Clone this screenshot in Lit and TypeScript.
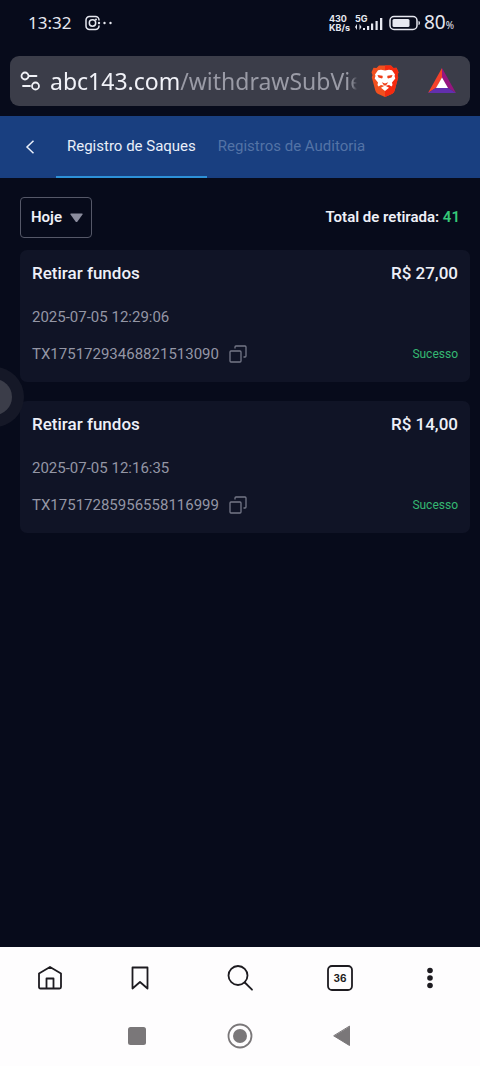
import { LitElement, html, css, svg } from "lit";
import { customElement, property, state } from "lit/decorators.js";
import { classMap } from "lit/directives/class-map.js";

interface Withdrawal {
  amount: string;
  date: string;
  tx: string;
  status: string;
}

const buttonReset = css`
  * {
    box-sizing: border-box;
  }
  svg {
    display: block;
    flex: none;
  }
  button,
  select {
    margin: 0;
    padding: 0;
    border: 0;
    background: none;
    color: inherit;
    font: inherit;
    cursor: pointer;
  }
`;

@customElement("status-bar")
export class StatusBar extends LitElement {
  static styles = [
    buttonReset,
    css`
      :host {
        display: flex;
        align-items: center;
        height: 56px;
        padding: 0 26px 10px 28px;
        color: #e6e8f0;
        font-family: "Noto Sans", sans-serif;
      }
      .time {
        font-size: 17px;
        line-height: 24px;
        margin-right: 14px;
      }
      .status {
        display: flex;
        align-items: center;
        margin-left: auto;
      }
      .speed {
        font-family: Inter, sans-serif;
        font-size: 9px;
        line-height: 9px;
        font-weight: 700;
        margin-right: 5px;
      }
      .battery {
        margin: 0 2px 0 5px;
      }
      .level {
        font-size: 19px;
        line-height: 24px;
      }
      .percent {
        font-size: 10px;
      }
      .net {
        font: 700 9px Inter, sans-serif;
      }
    `,
  ];
  render() {
    return html`
      <span class="time">13:32</span>
      <svg width="30" height="16" viewBox="0 0 30 16" fill="none" stroke="#e6e8f0" stroke-width="1.5" aria-hidden="true">
        <path d="M14 5.5V5a3.500 3.500 0 0 0-3.500-3.500h-6A3.500 3.500 0 0 0 1 5v6a3.500 3.500 0 0 0 3.500 3.500h6A3.500 3.500 0 0 0 14 11v-.5" />
        <circle cx="7.500" cy="8" r="3.200" />
        <g fill="#e6e8f0" stroke="none">
          <circle cx="11" cy="4.500" r="1" />
          <circle cx="14" cy="8" r="1.200" />
          <circle cx="19.500" cy="8" r="1.200" />
          <circle cx="25.500" cy="8" r="1.200" />
        </g>
      </svg>
      <div class="status">
        <div class="speed">430<br />KB/s</div>
        <svg width="29" height="18" viewBox="0 0 29 18" fill="#e6e8f0" aria-hidden="true">
          <text class="net" x="0" y="8">5G</text>
          <path d="M0 13l2-3v6zM6.500 13l-2-3v6z" />
          <path d="M8 14h2v2H8zM12 12h2.200v4H12zM16 9.500h2.200V16H16zM20.500 7h2.200v9h-2.200zM25 4h2.300v12H25z" />
        </svg>
        <svg class="battery" width="33" height="16" viewBox="0 0 33 16" aria-hidden="true">
          <rect x="1" y="1.500" width="27" height="13" rx="4" fill="none" stroke="#e6e8f0" stroke-width="1.500" />
          <rect x="3.500" y="4" width="17" height="8" rx="1.500" fill="#e6e8f0" />
          <path d="M29.500 6q1.500 0 1.500 2t-1.500 2z" fill="#e6e8f0" />
        </svg>
        <span class="level">80<span class="percent">%</span></span>
      </div>
    `;
  }
}

@customElement("address-bar")
export class AddressBar extends LitElement {
  static styles = [
    buttonReset,
    css`
      :host {
        display: flex;
        align-items: center;
        height: 50px;
        margin: 0 10px 10px;
        padding: 0 14px 0 10px;
        border-radius: 9px;
        background: #3b3d49;
      }
      .url {
        flex: 1;
        min-width: 0;
        margin: 0 14px 0 9px;
        overflow: hidden;
        white-space: nowrap;
        text-align: left;
        color: #9a9ba6;
        font-family: "Noto Sans", sans-serif;
        font-size: 23px;
        line-height: 36px;
        mask-image: linear-gradient(to left, transparent, #000 6px);
      }
      .host {
        color: #f1f2f8;
      }
      .rewards {
        margin-left: 29px;
      }
    `,
  ];
  render() {
    return html`
      <button aria-label="Site settings">
        <svg width="21" height="20" viewBox="0 0 21 20" fill="none" stroke="#f1f2f8" stroke-width="1.800" stroke-linecap="round">
          <circle cx="5" cy="5" r="3.500" />
          <path d="M9 5h7.500M3 15h7" />
          <circle cx="15.500" cy="15" r="3.500" />
        </svg>
      </button>
      <button class="url"><span class="host">abc143.com</span>/withdrawSubView</button>
      <button aria-label="Brave Shields">
        <svg width="28" height="34" viewBox="0 0 28 34">
          <path d="M8 1.500h12l2.500 2.500 3-.3 2 4.500-1 3 .7 2-3.600 13.500q-.6 1.800-2.300 3L14 33l-7.300-3.300q-1.700-1.200-2.300-3L.8 13.200l.7-2-1-3 2-4.500 3 .3z" fill="#f1501f" />
          <path d="M14 1.500h6l2.500 2.500 3-.3 2 4.500-1 3 .7 2-3.600 13.500q-.6 1.800-2.300 3L14 33z" fill="#f42a10" />
          <path d="M14 6.500l4-.8 3 .5 3 4.300-.5 1.500.8 2.500-3.300 4 .5 2.500-1 1.500-2.500-1.500L14 22l-4 -1-2.500 1.500-1-1.500.5-2.500-3.300-4 .8-2.500-.5-1.500 3-4.300 3-.5z" fill="#fff" />
          <path d="M14 21.500l4 2.200L14 27l-4-3.300z" fill="#fff" />
          <path d="M6.500 11l5 .8.300 1.500-.8 1.200-3.500-1zM21.500 11l-5 .8-.3 1.500.8 1.200 3.500-1zM10.800 18.200l3.200 1.400 3.200-1.400-1.700 2.600-1.500.9-1.500-.9z" fill="#ee3f18" />
        </svg>
      </button>
      <button class="rewards" aria-label="Brave Rewards">
        <svg width="28" height="26" viewBox="0 0 28 26">
          <path d="M14 0v10L8.500 19.500 0 25z" fill="#f4422b" />
          <path d="M14 0l14 25-8.500-5.500L14 10z" fill="#96157f" />
          <path d="M0 25l8.500-5.500h11L28 25z" fill="#622fae" />
          <path d="M14 9.500l6 10.500H8z" fill="#fff" />
        </svg>
      </button>
    `;
  }
}

@customElement("record-tabs")
export class RecordTabs extends LitElement {
  @state() private active = 0;
  private tabs = ["Registro de Saques", "Registros de Auditoria"];
  static styles = [
    buttonReset,
    css`
      :host {
        display: flex;
        height: 62px;
        padding-left: 20px;
        background: #193f80;
        color: #e9effa;
        font-size: 15px;
        line-height: 20px;
      }
      .back {
        display: flex;
        align-items: center;
        width: 36px;
        padding-left: 5px;
      }
      .tabs {
        display: flex;
      }
      .tab {
        padding: 0 11px;
        border-bottom: 2px solid transparent;
        color: #5373a6;
      }
      .tab.active {
        border-bottom-color: #2d91d8;
        color: #e9effa;
      }
    `,
  ];
  render() {
    return html`
      <button class="back" aria-label="Voltar">
        <svg width="10" height="14" viewBox="0 0 10 14" fill="none" stroke="#e9effa" stroke-width="1.500">
          <path d="M8.500 .8L2 7l6.500 6.200" />
        </svg>
      </button>
      <div class="tabs" role="tablist">
        ${this.tabs.map(
          (label, i) => html`<button
            role="tab"
            aria-selected=${i === this.active}
            class=${classMap({ tab: true, active: i === this.active })}
            @click=${() => (this.active = i)}
          >${label}</button>`
        )}
      </div>
    `;
  }
}

@customElement("withdrawal-card")
export class WithdrawalCard extends LitElement {
  @property({ attribute: false }) record!: Withdrawal;
  static styles = [
    buttonReset,
    css`
      :host {
        display: flex;
        flex-direction: column;
        padding: 12px 12px 18px;
        border-radius: 7px;
        background: #101426;
        color: #9496a5;
        font-size: 15px;
        line-height: 20px;
      }
      .row {
        display: flex;
        align-items: center;
        justify-content: space-between;
      }
      .title {
        margin-bottom: 23px;
        color: #eef0f8;
        font-size: 17px;
        line-height: 22px;
        font-weight: 500;
      }
      .date {
        margin-bottom: 17px;
      }
      .tx {
        display: flex;
        align-items: center;
        gap: 10px;
      }
      .status {
        color: #35b872;
        font-size: 12px;
      }
    `,
  ];
  render() {
    const r = this.record;
    return html`
      <div class="row title"><span>Retirar fundos</span><span>${r.amount}</span></div>
      <div class="date">${r.date}</div>
      <div class="row">
        <span class="tx">
          ${r.tx}
          <button aria-label="Copiar">
            <svg width="18" height="18" viewBox="0 0 18 18" fill="none" stroke="#747787" stroke-width="1.300">
              <rect x="1" y="6" width="11" height="11" rx="1" />
              <path d="M6 3.500V2a1 1 0 0 1 1-1h9a1 1 0 0 1 1 1v9a1 1 0 0 1-1 1h-1.500" />
            </svg>
          </button>
        </span>
        <span class="status">${r.status}</span>
      </div>
    `;
  }
}

@customElement("browser-nav")
export class BrowserNav extends LitElement {
  static styles = [
    buttonReset,
    css`
      :host {
        display: block;
        background: #fefdfe;
      }
      .tools {
        display: grid;
        grid-template-columns: 5fr 4fr 6fr 4fr 5fr;
        height: 61px;
      }
      .system {
        display: grid;
        grid-template-columns: repeat(3, 1fr);
        height: 58px;
        padding: 0 85px 2px;
      }
      button {
        display: grid;
        place-items: center;
      }
      .count {
        font: 700 10px Inter, sans-serif;
      }
    `,
  ];
  render() {
    const icon = (body: unknown) => html`
      <svg width="28" height="28" viewBox="0 0 28 28" fill="none" stroke="#1d1b20" stroke-width="1.800" stroke-linejoin="round" stroke-linecap="round">${body}</svg>
    `;
    return html`
      <nav class="tools">
        <button aria-label="Home">
          ${icon(svg`<path d="M3 9.500L14 3l11 6.500V23q0 1.500-1.500 1.500h-19Q3 24.500 3 23zM10.500 24.500v-10h7v10" />`)}
        </button>
        <button aria-label="Bookmarks">${icon(svg`<path d="M6.500 3.500h15v21L14 18l-7.500 6.500z" />`)}</button>
        <button aria-label="Search">${icon(svg`<circle cx="12" cy="11.500" r="9.500" /><path d="M18.800 18.500l7.200 7.200" />`)}</button>
        <button aria-label="Tabs">
          ${icon(svg`<rect x="2" y="2" width="24" height="24" rx="4" /><text class="count" x="14" y="18" text-anchor="middle" fill="#1d1b20" stroke="none">36</text>`)}
        </button>
        <button aria-label="Menu">
          ${icon(svg`<g fill="#1d1b20" stroke="none"><circle cx="14" cy="6.500" r="2.800" /><circle cx="14" cy="14" r="2.800" /><circle cx="14" cy="21.500" r="2.800" /></g>`)}
        </button>
      </nav>
      <nav class="system">
        <button aria-label="Recents">${icon(svg`<rect x="5" y="5" width="18" height="18" rx="2.500" fill="#7a7779" stroke="none" />`)}</button>
        <button aria-label="Home screen">
          ${icon(svg`<circle cx="14" cy="14" r="11.500" stroke="#7a7779" /><circle cx="14" cy="14" r="7" fill="#7a7779" stroke="none" />`)}
        </button>
        <button aria-label="Back">${icon(svg`<path d="M20.500 4.500v19L5 14z" fill="#7a7779" stroke="#7a7779" stroke-width="1" />`)}</button>
      </nav>
    `;
  }
}

@customElement("app-root")
export class AppRoot extends LitElement {
  private records: Withdrawal[] = [
    { amount: "R$ 27,00", date: "2025-07-05 12:29:06", tx: "TX17517293468821513090", status: "Sucesso" },
    { amount: "R$ 14,00", date: "2025-07-05 12:16:35", tx: "TX17517285956558116999", status: "Sucesso" },
  ];
  static styles = [
    buttonReset,
    css`
      :host {
        position: relative;
        display: flex;
        flex-direction: column;
        min-height: 100vh;
        overflow: hidden;
        background: #070b1b;
        color: #eef0f8;
        font-family: Roboto, sans-serif;
      }
      main {
        flex: 1;
        padding: 19px 10px 19px 20px;
      }
      .filters {
        display: flex;
        align-items: center;
        justify-content: space-between;
        margin-bottom: 12px;
        padding-right: 10px;
        font-size: 15px;
        line-height: 20px;
        font-weight: 600;
      }
      .period {
        display: grid;
        align-items: center;
      }
      .period select,
      .period svg {
        grid-area: 1 / 1;
      }
      .period select {
        appearance: none;
        width: 72px;
        height: 41px;
        padding: 0 0 2px 10px;
        border: 1px solid #555868;
        border-radius: 4px;
      }
      .period svg {
        justify-self: end;
        margin-right: 9px;
        pointer-events: none;
      }
      .summary {
        padding-bottom: 2px;
      }
      .total {
        color: #35c978;
      }
      .cards {
        display: flex;
        flex-direction: column;
        gap: 19px;
      }
      .bubble {
        position: absolute;
        left: -36px;
        top: 367px;
        display: grid;
        place-items: center;
        width: 60px;
        height: 60px;
        border-radius: 50%;
        background: #151827;
      }
      .bubble::before {
        content: "";
        width: 36px;
        height: 36px;
        border-radius: 50%;
        background: #3b3d49;
      }
    `,
  ];
  render() {
    return html`
      <status-bar></status-bar>
      <address-bar></address-bar>
      <record-tabs></record-tabs>
      <main>
        <div class="filters">
          <label class="period">
            <select aria-label="Período">
              <option>Hoje</option>
            </select>
            <svg width="13" height="10" viewBox="0 0 13 10"><path d="M1 .5h11q1 0 .5 1L7.500 8.500q-1 1.200-2 0L.5 1.500Q0 .5 1 .5z" fill="#8b8d9e" /></svg>
          </label>
          <span class="summary">Total de retirada: <span class="total">41</span></span>
        </div>
        <div class="cards">
          ${this.records.map((r) => html`<withdrawal-card .record=${r}></withdrawal-card>`)}
        </div>
      </main>
      <browser-nav></browser-nav>
      <button class="bubble" aria-label="Assistente"></button>
    `;
  }
}
